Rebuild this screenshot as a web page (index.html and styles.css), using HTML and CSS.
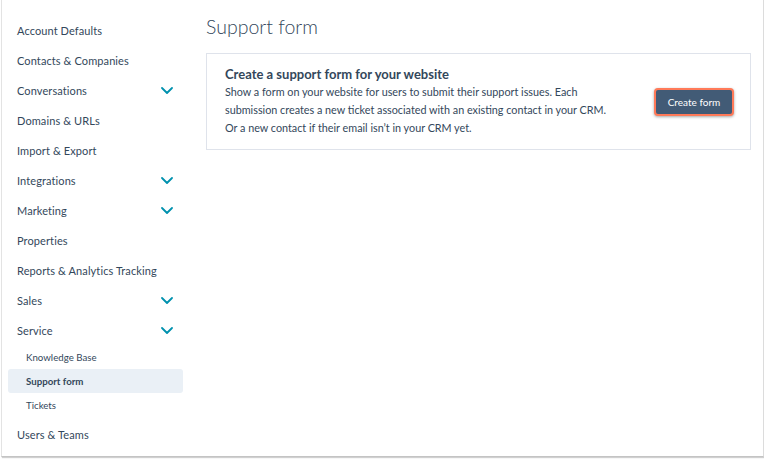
FILE: index.html
```html
<!DOCTYPE html>
<html>
<head>
<meta charset="utf-8">
<link rel="stylesheet" href="styles.css">
</head>
<body>
<div class="frame">
  <nav class="sidebar">
    <div class="item">Account Defaults</div>
    <div class="item">Contacts &amp; Companies</div>
    <div class="item">Conversations <svg class="chev" viewBox="0 0 12 7"><path d="M1 1l5 5 5-5" fill="none" stroke="#0091ae" stroke-width="1.8" stroke-linecap="round" stroke-linejoin="round"/></svg></div>
    <div class="item">Domains &amp; URLs</div>
    <div class="item">Import &amp; Export</div>
    <div class="item">Integrations <svg class="chev" viewBox="0 0 12 7"><path d="M1 1l5 5 5-5" fill="none" stroke="#0091ae" stroke-width="1.8" stroke-linecap="round" stroke-linejoin="round"/></svg></div>
    <div class="item">Marketing <svg class="chev" viewBox="0 0 12 7"><path d="M1 1l5 5 5-5" fill="none" stroke="#0091ae" stroke-width="1.8" stroke-linecap="round" stroke-linejoin="round"/></svg></div>
    <div class="item">Properties</div>
    <div class="item">Reports &amp; Analytics Tracking</div>
    <div class="item">Sales <svg class="chev" viewBox="0 0 12 7"><path d="M1 1l5 5 5-5" fill="none" stroke="#0091ae" stroke-width="1.8" stroke-linecap="round" stroke-linejoin="round"/></svg></div>
    <div class="item">Service <svg class="chev" viewBox="0 0 12 7"><path d="M1 1l5 5 5-5" fill="none" stroke="#0091ae" stroke-width="1.8" stroke-linecap="round" stroke-linejoin="round"/></svg></div>
    <div class="sublist">
      <div class="subitem">Knowledge Base</div>
      <div class="subitem active">Support form</div>
      <div class="subitem">Tickets</div>
    </div>
    <div class="item">Users &amp; Teams</div>
  </nav>
  <main class="main">
    <h1 class="title">Support form</h1>
    <section class="card">
      <div class="card-text">
        <h2 class="card-title">Create a support form for your website</h2>
        <p class="card-body">Show a form on your website for users to submit their support issues. Each<br>submission creates a new ticket associated with an existing contact in your CRM.<br>Or a new contact if their email isn’t in your CRM yet.</p>
      </div>
      <button class="btn">Create form</button>
    </section>
  </main>
</div>
</body>
</html>
```
FILE: styles.css
```css
html, body {
  margin: 0;
  padding: 0;
  background: #ffffff;
}
body {
  font-family: Lato, "Open Sans", sans-serif;
  color: #33475b;
  width: 764px;
  height: 459px;
  overflow: hidden;
}
.frame {
  display: flex;
  box-sizing: border-box;
  width: 763px;
  height: 457px;
  margin-left: 1px;
  border-left: 1px solid #e3e3e3;
  border-right: 1px solid #dcdcdc;
  border-bottom: 1px solid #c4c4c4;
  box-shadow: 1px 1px 1px #d0d0d0;
}
.sidebar {
  width: 175px;
  flex: none;
  padding: 15px 0 0 6px;
}
.item {
  height: 30px;
  display: flex;
  align-items: center;
  justify-content: space-between;
  padding: 0 9px 0 9px;
  font-size: 11px;
  letter-spacing: 0.1px;
  color: #33475b;
}
.chev {
  width: 12px;
  height: 7px;
  margin-right: 1px;
}
.sublist {
  padding-bottom: 2px;
}
.subitem {
  height: 24px;
  display: flex;
  align-items: center;
  padding-left: 18px;
  font-size: 9.7px;
  color: #33475b;
  border-radius: 3px;
}
.subitem.active {
  background: #eaf0f6;
  font-weight: 700;
}
.main {
  flex: 1;
  padding: 13px 12px 0 23px;
}
.title {
  margin: 0 0 12px;
  font-size: 19.5px;
  line-height: 28px;
  font-weight: 300;
  color: #33475b;
}
.card {
  display: flex;
  align-items: center;
  justify-content: space-between;
  border: 1px solid #dfe3eb;
  padding: 11px 16px 12px 18px;
}
.card-title {
  margin: 0;
  font-size: 13px;
  line-height: 18px;
  font-weight: 700;
  color: #33475b;
}
.card-body {
  margin: 0;
  font-size: 10.8px;
  line-height: 18px;
  color: #33475b;
}
.btn {
  font-family: inherit;
  font-size: 10px;
  color: #ffffff;
  background: #425b76;
  border: 2px solid #ff7a59;
  border-radius: 4px;
  width: 80px;
  height: 28px;
  padding: 0;
  box-shadow: 0 1px 3px rgba(0,0,0,0.35);
  margin-top: 1px;
}
```
